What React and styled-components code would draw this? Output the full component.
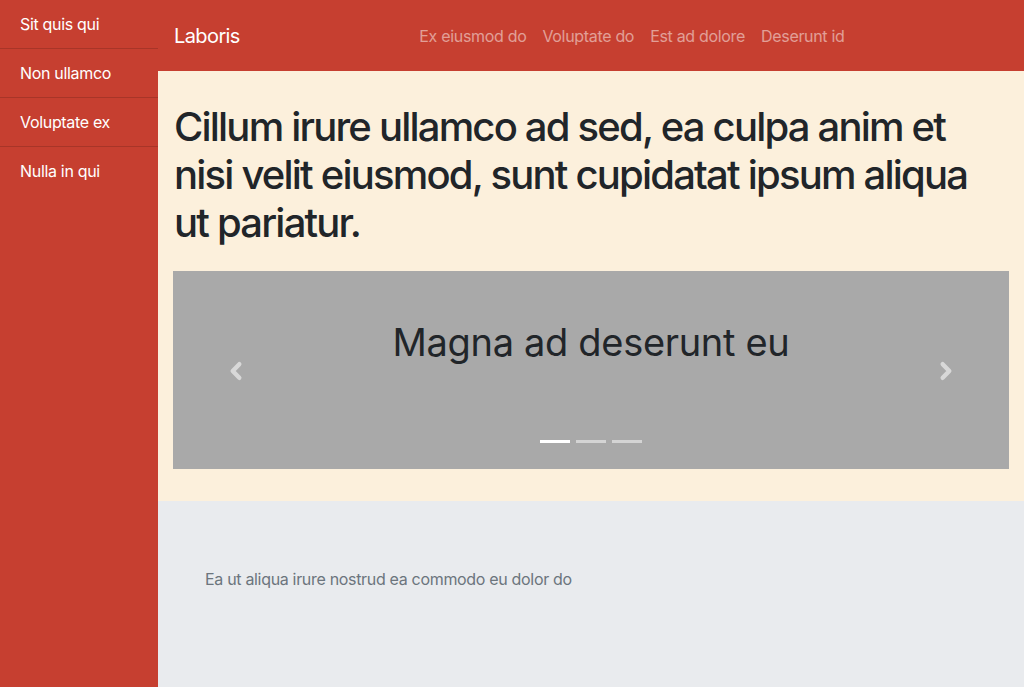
import React from "react";
import styled, { createGlobalStyle } from "styled-components";

const Global = createGlobalStyle`
  html, body { margin: 0; padding: 0; }
  body {
    font-family: Inter, "Helvetica Neue", Arial, sans-serif;
    font-size: 16px;
    line-height: 1.5;
    letter-spacing: -0.02em;
    color: #212529;
    background: #e9ebee;
  }
  * { box-sizing: border-box; }
`;

const Layout = styled.div`
  display: grid;
  grid-template-columns: 158px 1fr;
  min-height: 100vh;
`;

const Sidebar = styled.nav`
  background: #c63f30;
  display: flex;
  flex-direction: column;
`;

const SideItem = styled.a`
  display: block;
  padding: 12px 20px;
  color: #fff;
  text-decoration: none;
  border-bottom: 1px solid ${(p) => (p.$last ? "transparent" : "rgba(0,0,0,0.15)")};
`;

const Main = styled.div`
  display: flex;
  flex-direction: column;
  min-width: 0;
`;

const Navbar = styled.header`
  background: #c63f30;
  height: 71px;
  padding: 0 16px;
  display: flex;
  align-items: center;
`;

const Brand = styled.a`
  color: #fff;
  font-size: 20px;
  letter-spacing: -0.03em;
  text-decoration: none;
  margin-right: 16px;
`;

const NavLinks = styled.div`
  flex: 1;
  display: flex;
  justify-content: center;
`;

const NavLink = styled.a`
  color: rgba(255, 255, 255, 0.5);
  text-decoration: none;
  padding: 8px;
`;

const Hero = styled.section`
  background: #fcf0dc;
  padding: 32px 15px;
`;

const Heading = styled.h1`
  margin: 0 0 24px;
  padding-left: 1px;
  font-size: 40px;
  font-weight: 500;
  line-height: 48px;
  letter-spacing: -0.045em;
  color: #212529;
`;

const Carousel = styled.div`
  position: relative;
  background: #a9a9a9;
  height: 198px;
  display: flex;
  justify-content: center;
`;

const SlideTitle = styled.h2`
  margin: 47px 0 0;
  font-size: 38px;
  font-weight: 400;
  line-height: 48px;
  color: #212529;
`;

const Control = styled.button`
  position: absolute;
  top: 0;
  bottom: 0;
  ${(p) => (p.$side === "left" ? "left: 0;" : "right: 0;")}
  width: 15%;
  border: 0;
  background: transparent;
  display: flex;
  align-items: center;
  justify-content: center;
  padding: 0;
  padding-top: 1px;
  cursor: pointer;
`;

const Indicators = styled.ol`
  position: absolute;
  left: 0;
  right: 0;
  bottom: 0;
  margin: 0 0 16px;
  padding: 0;
  list-style: none;
  display: flex;
  justify-content: center;
`;

const Indicator = styled.li`
  width: 30px;
  height: 3px;
  margin: 10px 3px;
  background: #fff;
  opacity: ${(p) => (p.$active ? 1 : 0.5)};
`;

const Footer = styled.footer`
  flex: 1;
  background: #e9ebee;
  padding: 66px 47px;
  color: #6c757d;
`;

const Chevron = ({ dir }) => (
  <svg width="14" height="20" viewBox="0 0 14 20" aria-hidden="true">
    <polyline
      points={dir === "left" ? "10.3,3.2 3.7,10 10.3,16.8" : "3.7,3.2 10.3,10 3.7,16.8"}
      fill="none"
      stroke="rgba(255,255,255,0.55)"
      strokeWidth="4.4"
      strokeLinecap="round"
      strokeLinejoin="round"
    />
  </svg>
);

const sideItems = ["Sit quis qui", "Non ullamco", "Voluptate ex", "Nulla in qui"];
const navItems = ["Ex eiusmod do", "Voluptate do", "Est ad dolore", "Deserunt id"];

export default function App() {
  return (
    <>
      <Global />
      <Layout>
        <Sidebar>
          {sideItems.map((t, i) => (
            <SideItem key={t} href="#" $last={i === sideItems.length - 1}>
              {t}
            </SideItem>
          ))}
        </Sidebar>
        <Main>
          <Navbar>
            <Brand href="#">Laboris</Brand>
            <NavLinks>
              {navItems.map((t) => (
                <NavLink key={t} href="#">
                  {t}
                </NavLink>
              ))}
            </NavLinks>
          </Navbar>
          <Hero>
            <Heading>
              Cillum irure ullamco ad sed, ea culpa anim et nisi velit eiusmod, sunt cupidatat
              ipsum aliqua ut pariatur.
            </Heading>
            <Carousel>
              <SlideTitle>Magna ad deserunt eu</SlideTitle>
              <Control $side="left" aria-label="Previous">
                <Chevron dir="left" />
              </Control>
              <Control $side="right" aria-label="Next">
                <Chevron dir="right" />
              </Control>
              <Indicators>
                <Indicator $active />
                <Indicator />
                <Indicator />
              </Indicators>
            </Carousel>
          </Hero>
          <Footer>Ea ut aliqua irure nostrud ea commodo eu dolor do</Footer>
        </Main>
      </Layout>
    </>
  );
}
